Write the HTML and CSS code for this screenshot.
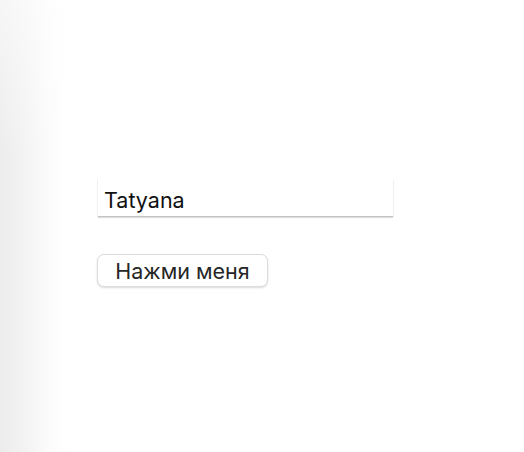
FILE: index.html
```html
<!DOCTYPE html>
<html lang="ru">
<head>
<meta charset="utf-8">
<link rel="stylesheet" href="styles.css">
</head>
<body>
<main class="page">
  <input class="name-input" type="text" value="Tatyana">
  <button class="btn" type="button">Нажми меня</button>
</main>
</body>
</html>
```
FILE: styles.css
```css
html, body {
  margin: 0;
  height: 100%;
}
body {
  background:
    linear-gradient(to bottom, rgba(255,255,255,0.55) 0, rgba(255,255,255,0) 160px) 0 0 / 80px 200px no-repeat,
    linear-gradient(to right, #ececec 0, #f3f3f3 25px, #fcfcfc 50px, #ffffff 68px);
  font-family: Inter, "Noto Sans", sans-serif;
}
.page {
  display: flex;
  flex-direction: column;
  align-items: flex-start;
  gap: 37px;
  padding: 179px 0 0 98px;
}
.name-input {
  box-sizing: border-box;
  width: 295px;
  height: 38px;
  margin: 0;
  padding: 5px 6px 0;
  border: none;
  border-bottom: 1px solid #c2c2c2;
  background: #fff;
  box-shadow: 0 1px 1px rgba(0,0,0,0.12), 1px 0 1px rgba(0,0,0,0.04), -1px 0 1px rgba(0,0,0,0.04);
  font-family: inherit;
  font-size: 21.5px;
  color: #111;
  outline: none;
}
.btn {
  box-sizing: border-box;
  width: 171px;
  height: 33px;
  margin: 0 0 0 -1px;
  padding: 1px 0 0;
  border: 1px solid #dcdcdc;
  border-radius: 7px;
  background: #fff;
  box-shadow: 0 1px 2px rgba(0,0,0,0.15);
  font-family: inherit;
  font-size: 21.5px;
  color: #262626;
  cursor: pointer;
}
```
